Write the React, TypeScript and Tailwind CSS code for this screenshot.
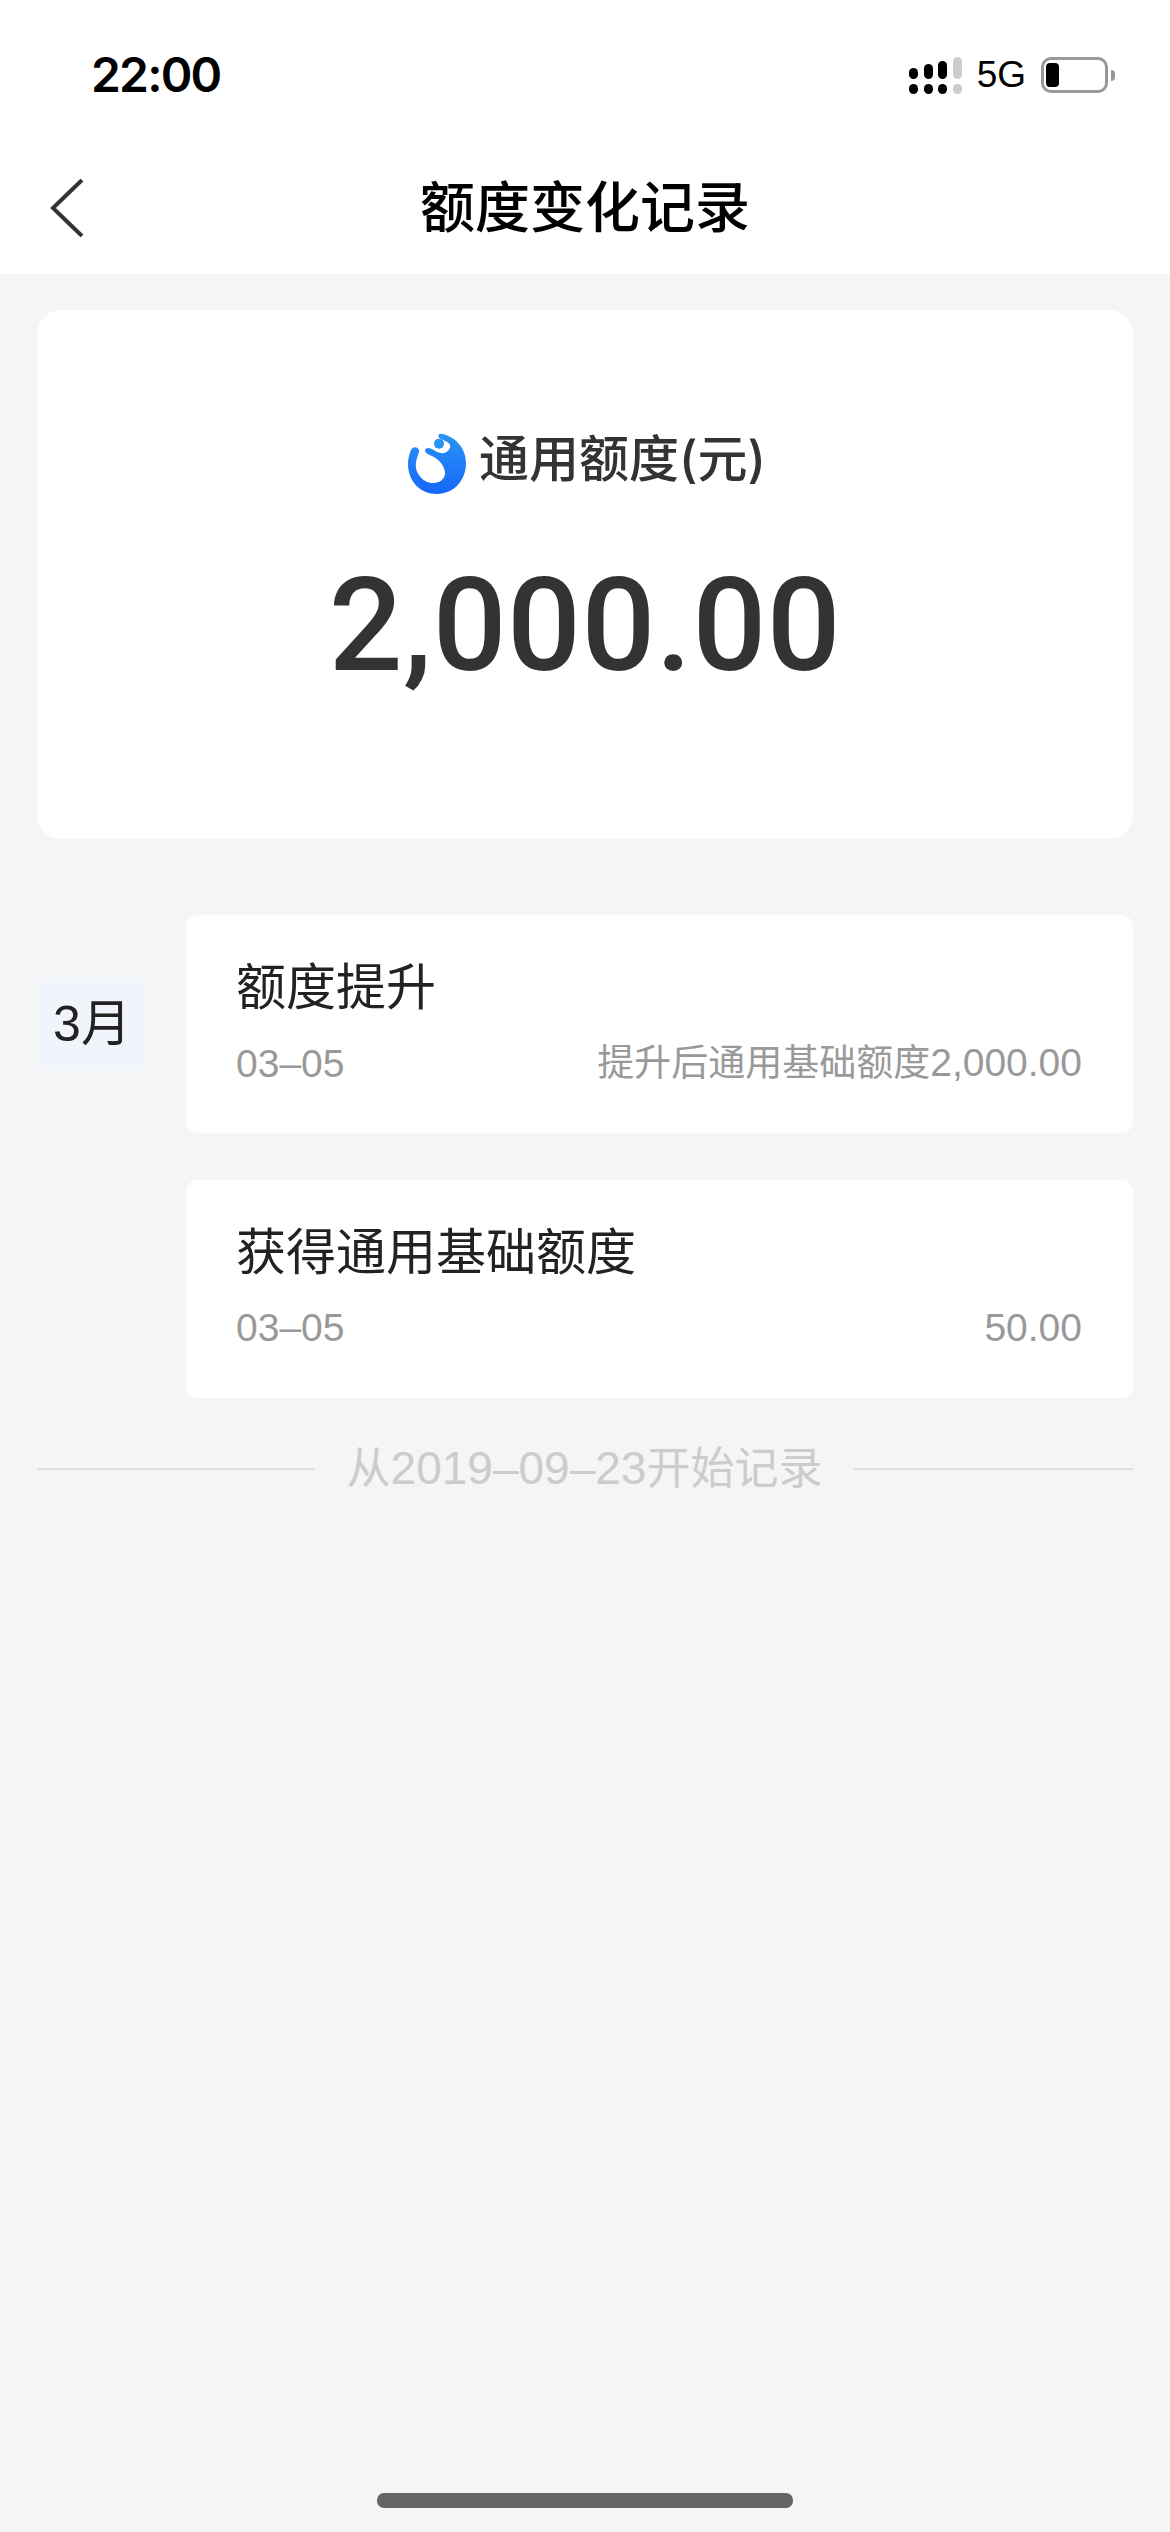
const base = "font-['Liberation_Sans','Noto_Sans_CJK_SC',sans-serif]";
const heading = "font-['Inter','Noto_Sans_CJK_SC',sans-serif]";

function Signal() {
  const tops = ["h-[11px]", "h-[15px]", "h-[18px]", "h-[22px]"];
  return (
    <div className="flex items-end gap-[5.5px]">
      {tops.map((h, i) => (
        <div key={h} className="flex flex-col gap-[5px]">
          <div className={`w-[9px] rounded-full ${h} ${i === 3 ? "bg-[#cccccc]" : "bg-black"}`} />
          <div className={`w-[9px] h-[10px] rounded-full ${i === 3 ? "bg-[#cccccc]" : "bg-black"}`} />
        </div>
      ))}
    </div>
  );
}

function Battery() {
  return (
    <div className="flex items-center gap-[3px]">
      <div className="w-[67px] h-[36px] rounded-[10px] border-[3px] border-[#999999] pl-[2px] py-[3px]">
        <div className="w-[13px] h-full rounded-[4px] bg-black" />
      </div>
      <div className="w-[4px] h-[11px] rounded-r-full bg-[#999999]" />
    </div>
  );
}

function Logo() {
  return (
    <svg width="58" height="61" viewBox="0 0 58 61" className="shrink-0">
      <defs>
        <linearGradient id="lg" x1="0.5" y1="0" x2="0.5" y2="1">
          <stop offset="0" stopColor="#2a93f5" />
          <stop offset="1" stopColor="#1668f8" />
        </linearGradient>
      </defs>
      <path
        fill="url(#lg)"
        d="M33 0.7C47 3 58 15 58 30C58 47 46 61 29 61C12 61 0 48 0 31C0 26 1.5 20 3 17C4.5 13.5 9.5 13 11 17C11.5 19 9.5 23 8.5 27C7 33 8 38 11 42C14.5 47.5 20 50 25 50C32 50 37 46 37 40C37 33 31 27 26 24C22 22 17.5 20.5 17 18C17 15 20 14 24 16C28 18.5 32 21 36 20C40 19 43 15 42 12C41 9 36 7.5 33 6C31 5 30 3.5 30.5 2C31 1 32 0.6 33 0.7Z"
      />
      <circle cx="31" cy="10.7" r="5" fill="#2a93f5" />
    </svg>
  );
}

function Chevron() {
  return (
    <svg width="34" height="58" viewBox="0 0 34 58" fill="none" className="shrink-0">
      <path d="M32 1L3 29L32 57" stroke="#333333" strokeWidth="4" />
    </svg>
  );
}

function Row({ title, date, value }: { title: string; date: string; value: React.ReactNode }) {
  return (
    <div className="bg-white rounded-[12px] h-[218px] pl-[50px] pr-[51px] pt-[41px]">
      <div className="text-[50px] leading-[64px] text-[#222222]">{title}</div>
      <div className="mt-[17px] flex justify-between items-center text-[39px] leading-[52px] text-[#999999]">
        <span>{date}</span>
        <span>{value}</span>
      </div>
    </div>
  );
}

export default function App() {
  return (
    <div className={`${base} w-[1170px] h-[2532px] bg-[#f5f5f5] flex flex-col`}>
      <header className="bg-white h-[274px] shrink-0 flex flex-col">
        <div className="flex items-center justify-between pl-[91px] pr-[55px] pt-[50px] h-[100px]">
          <span className={`${heading} text-[48px] leading-[50px] font-semibold text-black tracking-[-1.8px]`}>22:00</span>
          <div className="flex items-center gap-[15px]">
            <Signal />
            <span className="text-[37px] leading-[40px] text-black">5G</span>
            <Battery />
          </div>
        </div>
        <div className="relative flex-1 flex items-center justify-center pt-[40px]">
          <span className={`${heading} text-[55px] leading-[70px] font-medium text-black`}>额度变化记录</span>
          <div className="absolute left-[50px] top-[79px]">
            <Chevron />
          </div>
        </div>
      </header>

      <main className="flex-1 flex flex-col px-[37px] pt-[36px]">
        <section className="bg-white rounded-[24px] h-[529px] flex flex-col items-center pt-[123px]">
          <div className="flex items-center gap-[13px] pl-[4px]">
            <Logo />
            <span className={`${heading} text-[50px] leading-[60px] font-medium text-[#333333] -translate-y-[5px]`}>通用额度(元)</span>
          </div>
          <div className="mt-[52px] font-['Roboto',sans-serif] text-[130px] leading-[160px] font-medium text-[#333333] tracking-[0.5px]">
            2,000.00
          </div>
        </section>

        <section className="mt-[76px] flex gap-[39px] items-start">
          <div className="mt-[63px] w-[110px] h-[92px] shrink-0 bg-[#f1f4fa] rounded-[6px] flex items-center justify-center text-[50px] text-[#222222]">
            3月
          </div>
          <div className="flex-1 flex flex-col gap-[47px]">
            <Row
              title="额度提升"
              date="03–05"
              value={<><span className="text-[37px]">提升后通用基础额度</span>2,000.00</>}
            />
            <Row title="获得通用基础额度" date="03–05" value="50.00" />
          </div>
        </section>

        <div className="mt-[40px] flex items-center justify-between">
          <div className="w-[278px] h-[2px] bg-[#dedede]" />
          <span className="text-[46px] leading-[60px] text-[#cccccc]">
            <span className="text-[44px]">从</span>2019–09–23<span className="text-[44px]">开始记录</span>
          </span>
          <div className="w-[279px] h-[2px] bg-[#dedede]" />
        </div>

        <div className="mt-auto mb-[24px] self-center w-[416px] h-[15px] rounded-[7px] bg-[#656565]" />
      </main>
    </div>
  );
}
